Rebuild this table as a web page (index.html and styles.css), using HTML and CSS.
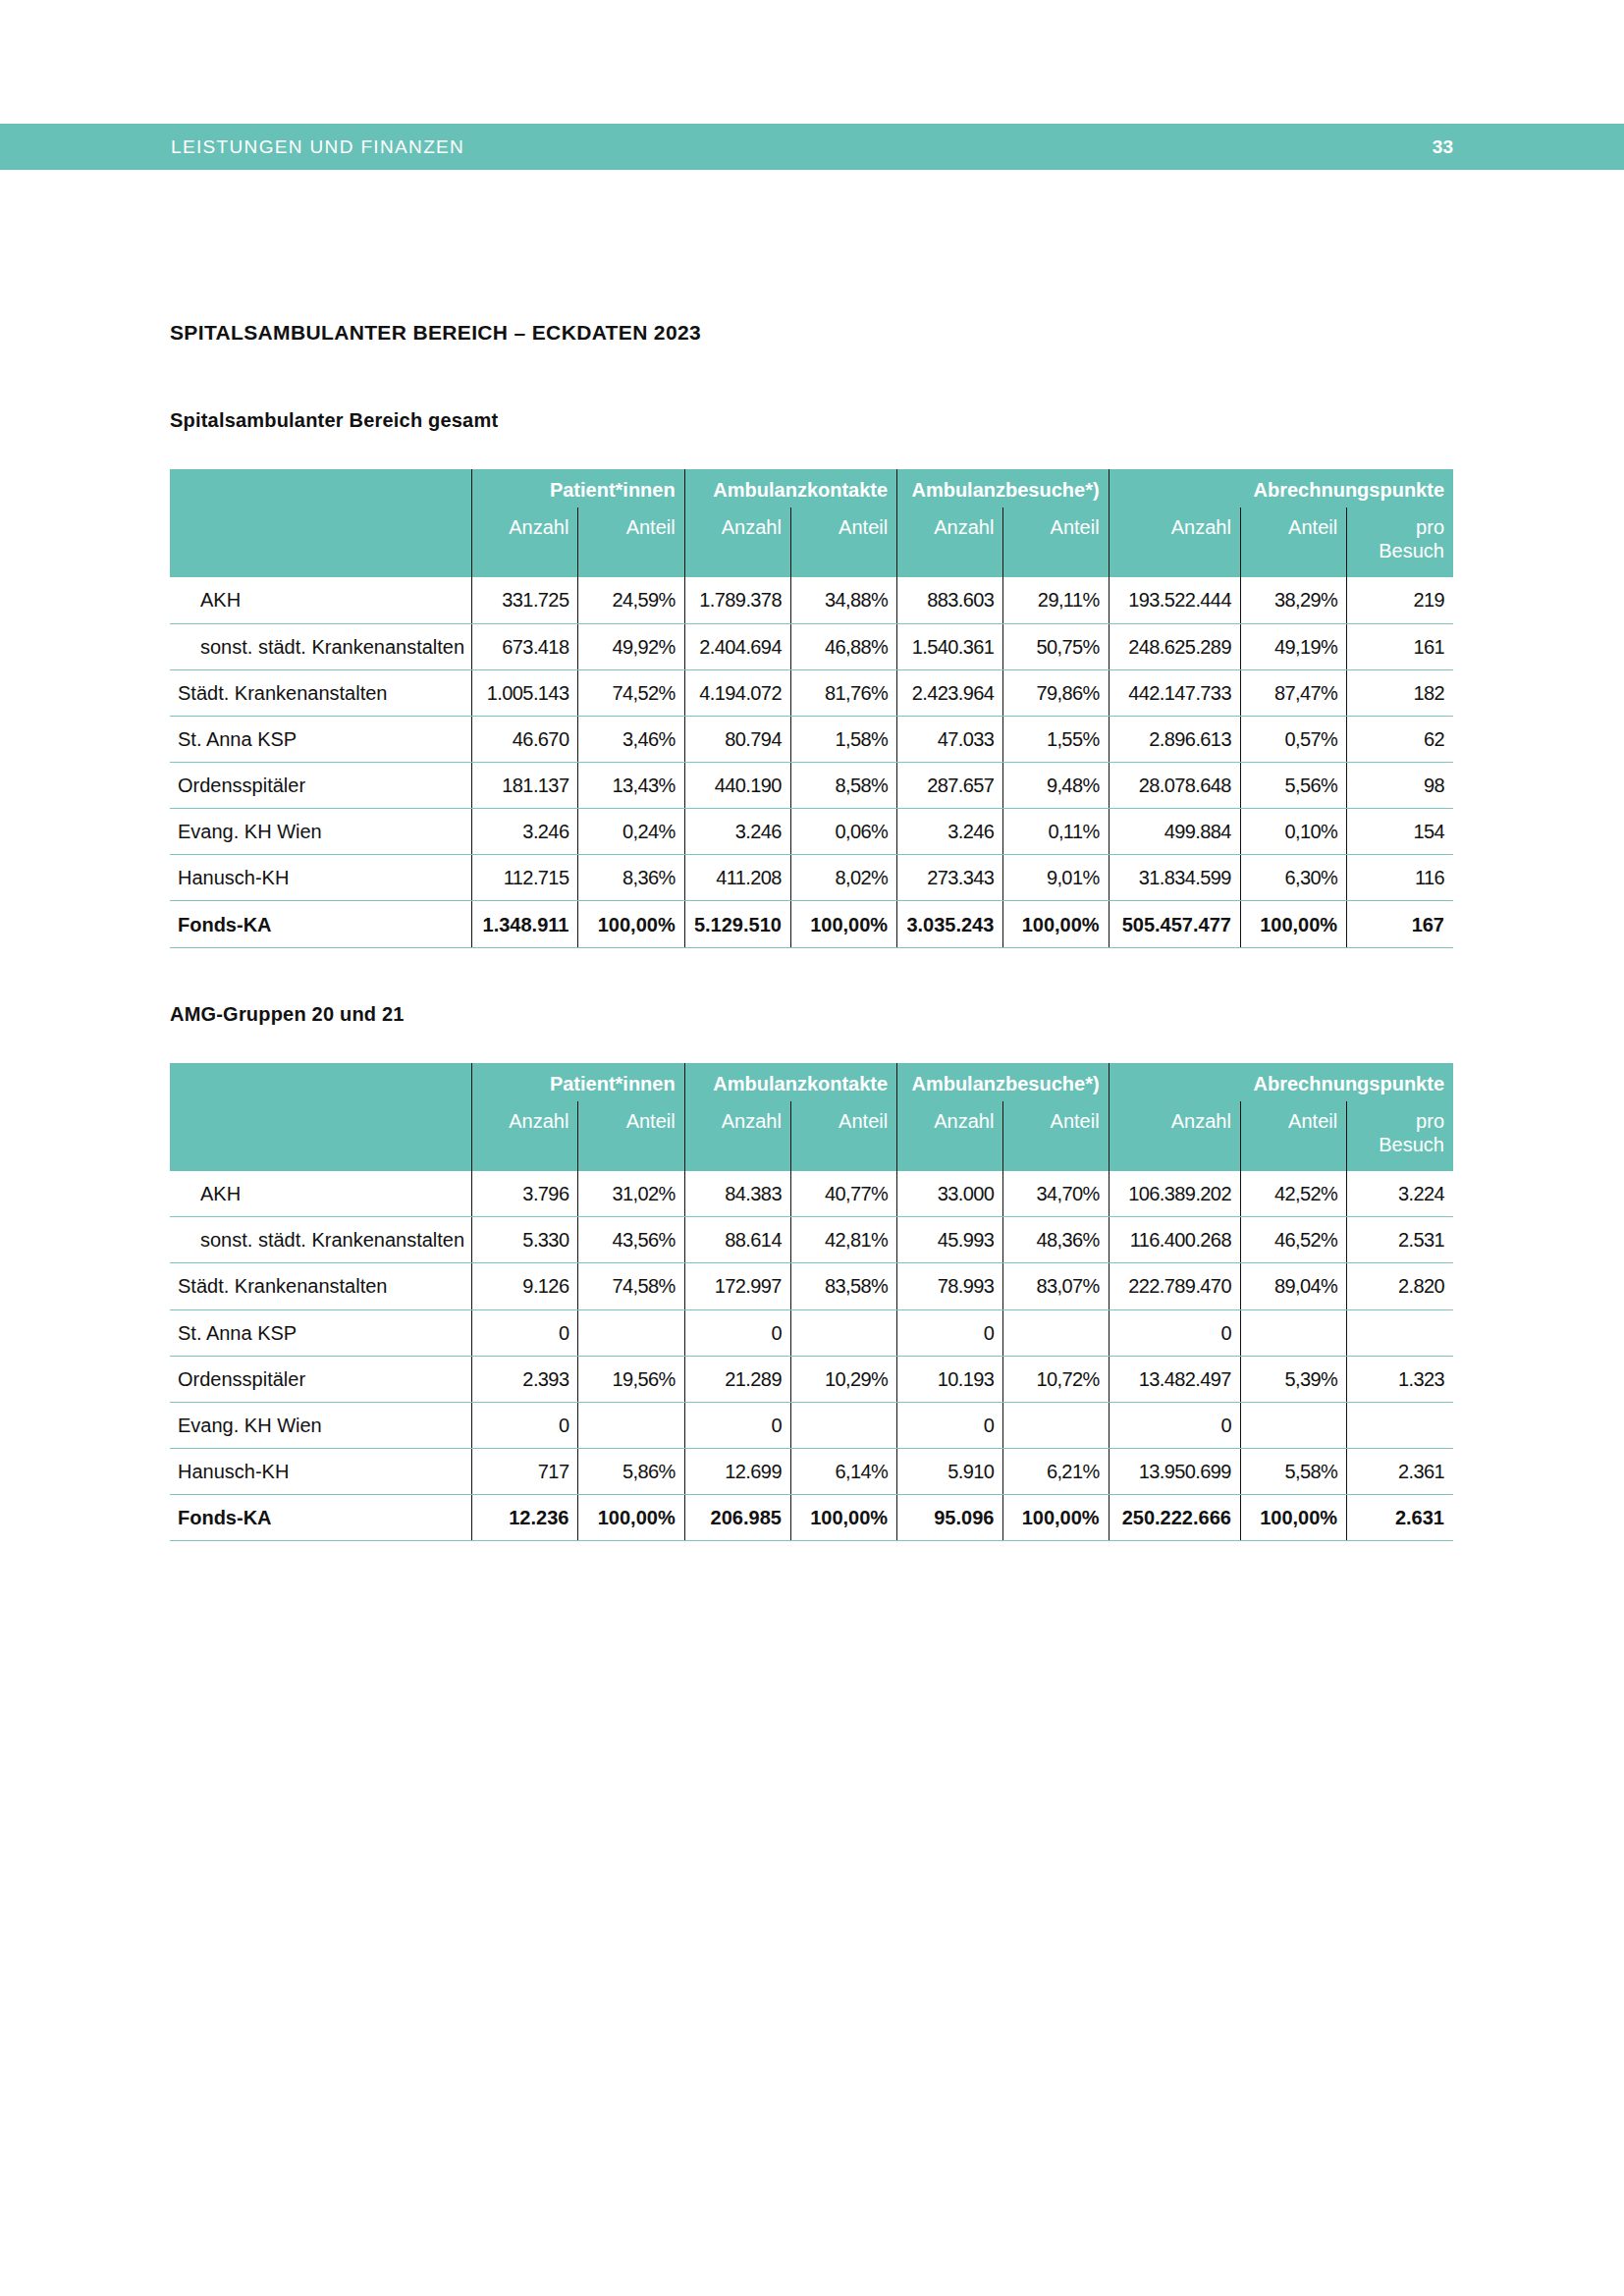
FILE: index.html
```html
<!DOCTYPE html>
<html lang="de">
<head>
<meta charset="utf-8">
<title>Leistungen und Finanzen</title>
<link rel="stylesheet" href="styles.css">
</head>
<body>
<header class="bar">
  <span class="bar-title">LEISTUNGEN UND FINANZEN</span>
  <span class="bar-page">33</span>
</header>
<main class="page">
  <h1 class="title">SPITALSAMBULANTER BEREICH – ECKDATEN 2023</h1>

  <h2 class="subtitle first">Spitalsambulanter Bereich gesamt</h2>
  <table class="data">
    <colgroup>
      <col class="c-name"><col class="c-n"><col class="c-n"><col class="c-n"><col class="c-n"><col class="c-n"><col class="c-n2"><col class="c-wide"><col class="c-n"><col class="c-n">
    </colgroup>
    <thead>
      <tr class="grp">
        <th class="blank" rowspan="2"></th>
        <th colspan="2" class="g">Patient*innen</th>
        <th colspan="2" class="g">Ambulanzkontakte</th>
        <th colspan="2" class="g">Ambulanzbesuche*)</th>
        <th colspan="3" class="g">Abrechnungspunkte</th>
      </tr>
      <tr class="sub">
        <th>Anzahl</th><th>Anteil</th><th>Anzahl</th><th>Anteil</th><th>Anzahl</th><th>Anteil</th><th>Anzahl</th><th>Anteil</th><th>pro<br>Besuch</th>
      </tr>
    </thead>
    <tbody>
      <tr><td class="name indent">AKH</td><td>331.725</td><td>24,59%</td><td>1.789.378</td><td>34,88%</td><td>883.603</td><td>29,11%</td><td>193.522.444</td><td>38,29%</td><td>219</td></tr>
      <tr><td class="name indent">sonst. städt. Krankenanstalten</td><td>673.418</td><td>49,92%</td><td>2.404.694</td><td>46,88%</td><td>1.540.361</td><td>50,75%</td><td>248.625.289</td><td>49,19%</td><td>161</td></tr>
      <tr><td class="name">Städt. Krankenanstalten</td><td>1.005.143</td><td>74,52%</td><td>4.194.072</td><td>81,76%</td><td>2.423.964</td><td>79,86%</td><td>442.147.733</td><td>87,47%</td><td>182</td></tr>
      <tr><td class="name">St. Anna KSP</td><td>46.670</td><td>3,46%</td><td>80.794</td><td>1,58%</td><td>47.033</td><td>1,55%</td><td>2.896.613</td><td>0,57%</td><td>62</td></tr>
      <tr><td class="name">Ordensspitäler</td><td>181.137</td><td>13,43%</td><td>440.190</td><td>8,58%</td><td>287.657</td><td>9,48%</td><td>28.078.648</td><td>5,56%</td><td>98</td></tr>
      <tr><td class="name">Evang. KH Wien</td><td>3.246</td><td>0,24%</td><td>3.246</td><td>0,06%</td><td>3.246</td><td>0,11%</td><td>499.884</td><td>0,10%</td><td>154</td></tr>
      <tr><td class="name">Hanusch-KH</td><td>112.715</td><td>8,36%</td><td>411.208</td><td>8,02%</td><td>273.343</td><td>9,01%</td><td>31.834.599</td><td>6,30%</td><td>116</td></tr>
      <tr class="total"><td class="name">Fonds-KA</td><td>1.348.911</td><td>100,00%</td><td>5.129.510</td><td>100,00%</td><td>3.035.243</td><td>100,00%</td><td>505.457.477</td><td>100,00%</td><td>167</td></tr>
    </tbody>
  </table>

  <h2 class="subtitle second">AMG-Gruppen 20 und 21</h2>
  <table class="data">
    <colgroup>
      <col class="c-name"><col class="c-n"><col class="c-n"><col class="c-n"><col class="c-n"><col class="c-n"><col class="c-n2"><col class="c-wide"><col class="c-n"><col class="c-n">
    </colgroup>
    <thead>
      <tr class="grp">
        <th class="blank" rowspan="2"></th>
        <th colspan="2" class="g">Patient*innen</th>
        <th colspan="2" class="g">Ambulanzkontakte</th>
        <th colspan="2" class="g">Ambulanzbesuche*)</th>
        <th colspan="3" class="g">Abrechnungspunkte</th>
      </tr>
      <tr class="sub">
        <th>Anzahl</th><th>Anteil</th><th>Anzahl</th><th>Anteil</th><th>Anzahl</th><th>Anteil</th><th>Anzahl</th><th>Anteil</th><th>pro<br>Besuch</th>
      </tr>
    </thead>
    <tbody>
      <tr><td class="name indent">AKH</td><td>3.796</td><td>31,02%</td><td>84.383</td><td>40,77%</td><td>33.000</td><td>34,70%</td><td>106.389.202</td><td>42,52%</td><td>3.224</td></tr>
      <tr><td class="name indent">sonst. städt. Krankenanstalten</td><td>5.330</td><td>43,56%</td><td>88.614</td><td>42,81%</td><td>45.993</td><td>48,36%</td><td>116.400.268</td><td>46,52%</td><td>2.531</td></tr>
      <tr><td class="name">Städt. Krankenanstalten</td><td>9.126</td><td>74,58%</td><td>172.997</td><td>83,58%</td><td>78.993</td><td>83,07%</td><td>222.789.470</td><td>89,04%</td><td>2.820</td></tr>
      <tr><td class="name">St. Anna KSP</td><td>0</td><td></td><td>0</td><td></td><td>0</td><td></td><td>0</td><td></td><td></td></tr>
      <tr><td class="name">Ordensspitäler</td><td>2.393</td><td>19,56%</td><td>21.289</td><td>10,29%</td><td>10.193</td><td>10,72%</td><td>13.482.497</td><td>5,39%</td><td>1.323</td></tr>
      <tr><td class="name">Evang. KH Wien</td><td>0</td><td></td><td>0</td><td></td><td>0</td><td></td><td>0</td><td></td><td></td></tr>
      <tr><td class="name">Hanusch-KH</td><td>717</td><td>5,86%</td><td>12.699</td><td>6,14%</td><td>5.910</td><td>6,21%</td><td>13.950.699</td><td>5,58%</td><td>2.361</td></tr>
      <tr class="total"><td class="name">Fonds-KA</td><td>12.236</td><td>100,00%</td><td>206.985</td><td>100,00%</td><td>95.096</td><td>100,00%</td><td>250.222.666</td><td>100,00%</td><td>2.631</td></tr>
    </tbody>
  </table>
</main>
</body>
</html>
```

FILE: styles.css
```css
html, body {
  margin: 0;
  padding: 0;
  background: #ffffff;
}

body {
  font-family: "Liberation Sans", Arial, sans-serif;
  color: #111111;
}

.bar {
  margin-top: 126px;
  height: 47px;
  background: #68c1b7;
  display: flex;
  align-items: center;
  justify-content: space-between;
  padding: 0 174px 0 174px;
  color: #ffffff;
  font-size: 19px;
}

.bar-title {
  letter-spacing: 1.35px;
}

.bar-page {
  font-weight: 700;
}

.page {
  padding-left: 173px;
  width: 1307px;
}

.title {
  margin: 153px 0 0 0;
  font-size: 21px;
  line-height: 26px;
  font-weight: 700;
  letter-spacing: 0.35px;
}

.subtitle {
  margin: 0;
  font-size: 20px;
  line-height: 24px;
  font-weight: 700;
  letter-spacing: 0.2px;
}

.subtitle.first {
  margin-top: 64px;
}

.subtitle.second {
  margin-top: 55px;
}

.data {
  margin-top: 38px;
  width: 1307px;
  table-layout: fixed;
  border-collapse: collapse;
  font-size: 20px;
}

.c-name { width: 307px; }
.c-n { width: 108px; }
.c-n2 { width: 107px; }
.c-wide { width: 134px; }

.data thead th {
  background: #68c1b7;
  color: #ffffff;
  text-align: right;
  vertical-align: top;
  padding: 9px 9px 0 0;
  line-height: 24px;
}

.data .grp th {
  height: 39px;
  box-sizing: border-box;
  padding-top: 9px;
  font-weight: 700;
}

.data .grp th.g {
  border-left: 1px solid #111111;
}

.data .sub th {
  height: 71px;
  box-sizing: border-box;
  padding-top: 8px;
  font-weight: 400;
  border-left: 1px solid #111111;
}

.data tbody td {
  height: 47.15px;
  box-sizing: border-box;
  padding: 0 9px 0 0;
  text-align: right;
  vertical-align: middle;
  line-height: 24px;
  letter-spacing: -0.6px;
  border-left: 1px solid #111111;
  border-bottom: 1px solid #7cc4bd;
  white-space: nowrap;
}

.data tbody td.name {
  border-left: none;
  text-align: left;
  padding-left: 8px;
  letter-spacing: 0;
}

.data tbody td.name.indent {
  padding-left: 31px;
}

.data tbody tr.total td {
  font-weight: 700;
  letter-spacing: 0;
}
```
